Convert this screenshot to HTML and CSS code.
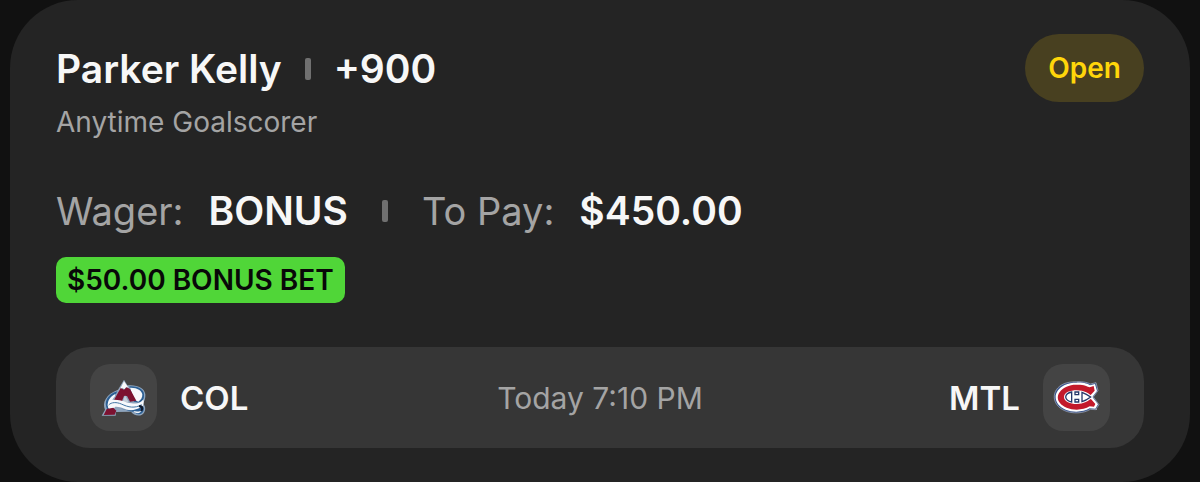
FILE: index.html
```html
<!DOCTYPE html>
<html lang="en">
<head>
<meta charset="utf-8">
<meta name="viewport" content="width=device-width, initial-scale=1">
<title>Parker Kelly +900</title>
<link rel="stylesheet" href="styles.css">
</head>
<body>
<main class="card">
  <header class="header">
    <div class="selection">
      <h1 class="title"><span>Parker Kelly</span><span class="divider"></span><span>+900</span></h1>
      <p class="market">Anytime Goalscorer</p>
    </div>
    <span class="status">Open</span>
  </header>
  <div class="amounts">
    <dl class="amount"><dt>Wager:</dt><dd>BONUS</dd></dl>
    <span class="divider"></span>
    <dl class="amount"><dt>To Pay:</dt><dd>$450.00</dd></dl>
  </div>
  <span class="bonus">$50.00 BONUS BET</span>
  <section class="game">
    <div class="team">
      <span class="tile">
        <svg class="logo" viewBox="58 66 144 126" aria-hidden="true">
          <path d="M140 91C170 88 192 99 194 118C195 130 191 140 186 146C197 152 196 172 184 179C171 186 157 178 151 170L106 171L105 182H63L73 164C64 143 75 118 112 104L130 74Z" fill="#8fa5bd"/>
          <path d="M146 94C169 92 190 102 190 118C191 130 187 139 180 144L160 140Z" fill="#2b5f94"/>
          <path d="M148 98C169 97 184 107 185 118C186 128 180 136 173 140L160 134Z" fill="#f7f9fc"/>
          <path d="M130 79L144 99L136 97L131 103L125 98L115 108Z" fill="#fafafc"/>
          <path d="M120 99L130 104L138 97L148 102L167 137L148 140L139 123H130L123 140L98 139Z" fill="#7c1230"/>
          <path d="M133 121L144 141H126Z" fill="#c5cfdb"/>
          <path d="M110 109C80 118 68 142 80 164L94 159C84 142 89 130 103 122Z" fill="#2b5f94"/>
          <path d="M105 116C82 127 76 147 86 164L103 158C90 146 93 132 102 125Z" fill="#f4f7fb"/>
          <path d="M87 164C75 148 83 134 101 134C126 134 133 143 153 145C170 148 184 141 188 133C194 154 178 168 157 167C134 165 121 154 105 155C97 156 92 159 87 164Z" fill="#f7f9fc"/>
          <path d="M84 150C92 141 108 141 122 147C143 157 162 161 183 149" fill="none" stroke="#4276a5" stroke-width="3"/>
          <path d="M78 162L98 158L107 167L102 179L69 180Z" fill="#7c1230"/>
          <path d="M118 160C136 163 146 172 162 170C169 181 183 180 188 169C192 160 188 153 183 153C174 166 140 170 118 160Z" fill="#2b5f94"/>
          <path d="M158 168C167 178 180 176 184 165C176 171 167 170 158 168Z" fill="#f2f4f8"/>
          <path d="M176 150C187 149 191 160 185 168L179 169C183 161 181 157 174 156Z" fill="#101a2c"/>
        </svg>
      </span>
      <strong>COL</strong>
    </div>
    <time class="time">Today 7:10 PM</time>
    <div class="team">
      <strong>MTL</strong>
      <span class="tile">
        <svg class="logo" viewBox="52 66 144 126" aria-hidden="true">
          <path d="M122 80C145 79 159 84 164 87L181 83L187 107L173 126L190 149L180 164L164 163C143 176 110 177 87 167C46 149 46 104 83 87C94 82 108 80 122 80Z" fill="#38538a" stroke="#a6adbf" stroke-width="2"/>
          <path d="M122 83C145 82 157 87 163 91L178 87L184 108L170 126L187 148L179 161L162 160C143 172 111 173 90 164C51 147 50 109 87 90C98 84 110 83 122 83Z" fill="#fff"/>
          <path d="M122 89C143 88 156 94 162 97L174 93L177 107L160 125L179 147L175 155L162 154C143 166 113 167 93 158C58 143 58 113 91 96C102 90 110 89 122 89Z" fill="#c3192b"/>
          <path d="M85 126C85 112 104 106 123 106C146 106 160 116 172 126C159 138 144 147 123 147C104 147 85 140 85 126Z" fill="#fff"/>
          <path d="M90 126C91 118 98 113 108 111V141C98 139 91 134 90 126ZM118 111H129V119H118ZM118 133H129V141H118ZM139 112C150 116 158 121 165 126C157 132 150 137 139 140Z" fill="#fff" stroke="#26376a" stroke-width="4"/>
          <circle cx="182" cy="163" r="2" fill="#a6adbf"/>
        </svg>
      </span>
    </div>
  </section>
</main>
</body>
</html>
```
FILE: styles.css
```css
* { box-sizing: border-box; }

body {
  margin: 0;
  padding: 0 10px;
  background: #111;
  color: #f7f7f7;
  font-family: Inter, "Liberation Sans", sans-serif;
}

.card {
  padding: 34px 46px;
  border-radius: 68px;
  background: #242424;
}

.header {
  display: flex;
  align-items: flex-start;
  justify-content: space-between;
}

.selection { padding-top: 11px; }

.title {
  display: flex;
  align-items: center;
  gap: 23px;
  margin: 0;
  font-size: 39px;
  font-weight: 600;
  line-height: 48px;
}

.divider {
  width: 6px;
  height: 22px;
  border-radius: 2px;
  background: #707070;
}

.market {
  margin: 11px 0 0;
  color: #a4a4a4;
  font-size: 28px;
  line-height: 36px;
}

.status {
  padding: 16px 23px;
  border-radius: 34px;
  background: #484020;
  color: #ffd60a;
  font-size: 28px;
  font-weight: 600;
  line-height: 36px;
}

.amounts {
  display: flex;
  align-items: center;
  gap: 34px;
  margin: 47px 0 22px;
  font-size: 39px;
  line-height: 48px;
}

.amount {
  display: flex;
  align-items: baseline;
  gap: 25px;
  margin: 0;
}

.amount dt { color: #a4a4a4; font-size: 38px; }
.amount dd { margin: 0; font-weight: 600; }

.bonus {
  display: block;
  width: fit-content;
  padding: 5px 11px;
  border-radius: 10px;
  background: #50d638;
  color: #080808;
  font-size: 28px;
  font-weight: 600;
  line-height: 36px;
}

.game {
  display: grid;
  grid-template-columns: 1fr auto 1fr;
  align-items: center;
  margin-top: 44px;
  padding: 17px 34px;
  border-radius: 34px;
  background: #363636;
}

.team {
  display: flex;
  align-items: center;
  gap: 23px;
  font-size: 33px;
  line-height: 40px;
}

.team:last-child { justify-content: flex-end; }
.team strong { font-weight: 600; }

.tile {
  display: grid;
  place-items: center;
  width: 67px;
  height: 67px;
  border-radius: 20px;
  background: #444;
}

.logo { width: 48px; height: 42px; }

.time {
  color: #a4a4a4;
  font-size: 30px;
  line-height: 40px;
}
```
